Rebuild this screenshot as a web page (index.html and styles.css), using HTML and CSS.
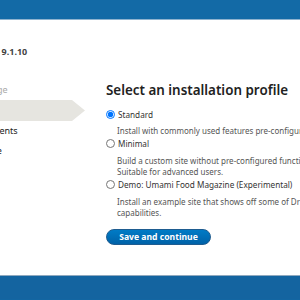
FILE: index.html
```html
<!DOCTYPE html>
<html lang="en">
<head>
    <meta charset="UTF-8">
    <title>Choose profile | Drupal</title>
    <link rel="stylesheet" href="styles.css">
</head>
<body>
<div class="top-bar"></div>

<div class="page">
    <div class="sidebar">
        <h2 class="site-name">Drupal 9.1.10</h2>
        <ol class="task-list">
            <li class="done">Choose language</li>
            <li class="active">Choose profile</li>
            <li>Verify requirements</li>
            <li>Set up database</li>
            <li>Install site</li>
            <li>Configure site</li>
        </ol>
    </div>

    <main class="content">
        <h1 class="page-title">Select an installation profile</h1>
        <form class="profile-form">
            <div class="option">
                <label><input type="radio" name="profile" checked> Standard</label>
                <p class="desc">Install with commonly used features pre-configured.</p>
            </div>
            <div class="option">
                <label><input type="radio" name="profile"> Minimal</label>
                <p class="desc">Build a custom site without pre-configured functionality.<br>Suitable for advanced users.</p>
            </div>
            <div class="option">
                <label><input type="radio" name="profile"> Demo: Umami Food Magazine (Experimental)</label>
                <p class="desc">Install an example site that shows off some of Drupal's<br>capabilities.</p>
            </div>
            <button class="submit-btn" type="button">Save and continue</button>
        </form>
    </main>
</div>

<div class="bottom-bar"></div>
</body>
</html>
```

FILE: styles.css
```css
* {
    box-sizing: border-box;
}
body {
    margin: 0;
    background: #1366a2;
    color: #333;
    font-family: 'Noto Sans', 'DejaVu Sans', sans-serif;
    overflow: hidden;
    height: 300px;
}
.top-bar {
    height: 20px;
    background: #136aa6;
    border-bottom: 1px solid #8fb3cf;
}
.page {
    display: flex;
    height: 256px;
    background: #fff;
    border-bottom: 1px solid #8fa9bf;
}
.bottom-bar {
    height: 23px;
    background: #1464a0;
}
.sidebar {
    width: 106px;
    flex: none;
    overflow: hidden;
    padding-top: 26px;
}
.site-name {
    margin: 0 0 25px -31px;
    font-size: 9px;
    font-weight: bold;
    color: #444;
    line-height: 12px;
    white-space: nowrap;
}
.task-list {
    list-style: none;
    margin: 0 0 0 -66px;
    padding: 0;
    font-size: 9px;
    color: #222;
}
.task-list li {
    height: 20px;
    line-height: 20px;
    white-space: nowrap;
}
.task-list li.done {
    color: #aaa;
    line-height: 14px;
    height: 14px;
    margin-bottom: 3px;
}
.task-list li.active {
    height: 21px;
    line-height: 21px;
    color: #e6e5e0;
    background: #e6e5e0;
    width: 151px;
    clip-path: polygon(0 0, 138px 0, 151px 50%, 138px 100%, 0 100%);
}
.content {
    flex: 1;
    min-width: 0;
    padding-top: 60px;
    white-space: nowrap;
}
.page-title {
    margin: 0 0 7px;
    font-size: 13.4px;
    font-weight: 600;
    color: #222;
    line-height: 20px;
}
.option label {
    display: flex;
    align-items: center;
    gap: 3px;
    font-size: 8.2px;
    color: #333;
    height: 14px;
}
.option input {
    margin: 0;
    width: 9px;
    height: 9px;
}
.desc {
    margin: 4px 0 0 11px;
    font-size: 8px;
    line-height: 11.5px;
    color: #555;
}
.submit-btn {
    margin-top: 10px;
    width: 105px;
    height: 16px;
    border: 1px solid #1e5c90;
    border-radius: 10px;
    background: linear-gradient(#007bc6, #0062a8);
    color: #fff;
    font-family: 'Noto Sans', sans-serif;
    font-weight: bold;
    font-size: 8.6px;
    padding: 0;
}
```
